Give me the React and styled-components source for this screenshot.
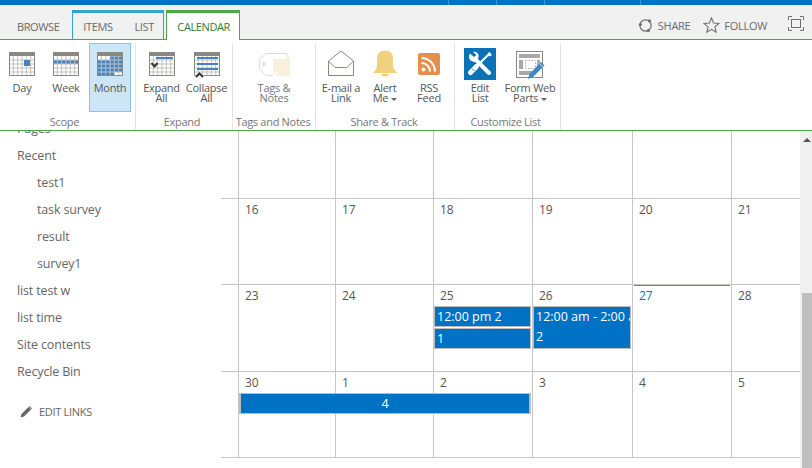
import React from 'react';
import styled, { createGlobalStyle } from 'styled-components';

const GlobalStyle = createGlobalStyle`
  html, body {
    margin: 0;
    height: 100%;
    overflow: hidden;
    background: #fff;
  }
  #root {
    height: 100%;
  }
`;

const Page = styled.div`
  display: flex;
  flex-direction: column;
  width: 812px;
  height: 468px;
  overflow: hidden;
  font-family: 'Open Sans', 'Noto Sans', sans-serif;
  color: #666;
`;

const TopBar = styled.div`
  display: flex;
  justify-content: flex-end;
  height: 5px;
  background: #0072c6;
`;
const SuiteCell = styled.div`
  width: ${({ w }) => w}px;
  box-sizing: border-box;
  border-left: 1px solid #3d90d2;
`;

const TabBar = styled.div`
  display: flex;
  align-items: flex-end;
  height: 35px;
  box-sizing: border-box;
  background: #f1f1f1;
  border-bottom: 1px solid #4ca64a;
  position: relative;
`;
const Tab = styled.div`
  font-size: 11px;
  line-height: 16px;
  letter-spacing: -0.4px;
  padding: 0 0 4px;
  margin-left: ${({ left }) => left}px;
  color: #6a6a6a;
`;
const ContextGroup = styled.div`
  display: flex;
  align-items: flex-end;
  box-sizing: border-box;
  width: 92px;
  height: 29px;
  margin-left: 13px;
  border: 1px solid #35a4cb;
  border-top-width: 3px;
  border-bottom: none;
`;
const ActiveTab = styled.div`
  box-sizing: border-box;
  width: 74px;
  height: 30px;
  margin: 0 0 -1px 2px;
  padding: 6px 0 0 10px;
  background: #fff;
  border: 1px solid #4ca64a;
  border-top-width: 3px;
  border-bottom: none;
  font-size: 11px;
  line-height: 16px;
  letter-spacing: -0.4px;
  color: #2f7d34;
`;
const TabActions = styled.div`
  display: flex;
  align-items: center;
  margin-left: auto;
  height: 100%;
  padding: 0 8px 0 0;
`;
const TabAction = styled.div`
  display: flex;
  align-items: center;
  gap: ${({ gap }) => gap}px;
  margin-right: ${({ right }) => right}px;
  font-size: 11px;
  letter-spacing: -0.3px;
  color: #6a6a6a;
  position: relative;
  top: 3px;
`;
const FocusButton = styled.div`
  display: flex;
  position: relative;
  top: 1px;
`;

const Ribbon = styled.div`
  display: flex;
  height: 91px;
  box-sizing: border-box;
  padding-top: 3px;
  background: #fff;
  border-bottom: 1px solid #4ca64a;
  flex-shrink: 0;
`;
const Group = styled.div`
  display: flex;
  flex-direction: column;
  justify-content: space-between;
  box-sizing: border-box;
  width: ${({ w }) => w}px;
  padding-left: ${({ pad }) => pad || 0}px;
  border-right: 1px solid #e4e4e4;
`;
const GroupButtons = styled.div`
  display: flex;
`;
const GroupLabel = styled.div`
  height: 16px;
  margin-left: ${({ pad }) => -(pad || 0)}px;
  padding-right: ${({ shift }) => shift || 0}px;
  font-size: 11px;
  line-height: 16px;
  text-align: center;
  letter-spacing: -0.3px;
  color: #777;
  white-space: nowrap;
`;
const RibbonButton = styled.div`
  display: flex;
  flex-direction: column;
  align-items: center;
  box-sizing: border-box;
  width: ${({ w }) => w || 44}px;
  height: 69px;
  padding-top: 5px;
  ${({ active }) =>
    active &&
    `
    margin: 0 1px;
    width: 42px;
    background: #cde6f7;
    border: 1px solid #92c0e0;
    padding-top: 4px;
  `}
`;
const ButtonText = styled.div`
  margin-top: 3px;
  font-size: 11px;
  line-height: 10px;
  letter-spacing: -0.25px;
  text-align: center;
  color: ${({ dim }) => (dim ? '#777' : '#555')};
  white-space: nowrap;
`;
const Caret = styled.span`
  display: inline-block;
  margin-left: 3px;
  vertical-align: 1px;
  border-left: 3px solid transparent;
  border-right: 3px solid transparent;
  border-top: 3px solid #666;
`;

const Main = styled.div`
  display: flex;
  flex: 1;
  min-height: 0;
  overflow: hidden;
`;
const Nav = styled.nav`
  width: 221px;
  flex-shrink: 0;
  margin-top: -16px;
`;
const NavItem = styled.div`
  height: 27px;
  line-height: 27px;
  padding-left: ${({ sub }) => (sub ? 37 : 17)}px;
  font-size: 12.5px;
  letter-spacing: -0.15px;
  color: #666;
`;
const EditLinks = styled.div`
  display: flex;
  align-items: center;
  gap: 7px;
  margin: 19px 0 0 20px;
  font-size: 11px;
  letter-spacing: -0.3px;
  color: #666;
`;

const Calendar = styled.div`
  width: 579px;
  flex-shrink: 0;
`;
const Week = styled.div`
  display: grid;
  grid-template-columns: 17px 97px 98px 99px 100px 99px 69px;
  grid-template-rows: 21px 22px 22px 1fr;
  box-sizing: border-box;
  height: ${({ h }) => h}px;
  border-top: ${({ open }) => (open ? 'none' : '1px solid #c6c6c6')};
  border-bottom: ${({ last }) => (last ? '1px solid #c6c6c6' : 'none')};
`;
const DayCell = styled.div`
  grid-row: 1 / -1;
  grid-column: ${({ col }) => col + 2};
  box-sizing: border-box;
  padding: 2px 0 0 6px;
  border-left: 1px solid #c6c6c6;
  font-size: 12px;
  line-height: 18px;
  color: ${({ today }) => (today ? '#0072c6' : '#555')};
`;
const TodayMark = styled.div`
  height: 1px;
  margin: -2px 1px 1px -5px;
  background: #3b8fd8;
`;
const EventBar = styled.div`
  grid-row: ${({ row }) => row} / span ${({ rows }) => rows || 1};
  grid-column: ${({ col }) => col + 2} / span ${({ span }) => span || 1};
  z-index: 1;
  box-sizing: border-box;
  margin: 0 1px 1px 1px;
  padding: 0 2px;
  overflow: hidden;
  white-space: nowrap;
  background: #0072c6;
  border: 1px solid #bdbdbd;
  border-width: ${({ wide }) => (wide ? '1px 2px' : '1px')};
  font-size: 12.5px;
  line-height: 20px;
  color: #fff;
  text-align: ${({ wide }) => (wide ? 'center' : 'left')};
`;

const Scrollbar = styled.div`
  flex: 1;
  display: flex;
  flex-direction: column;
  align-items: flex-end;
  background: #f0f0f0;
`;
const ScrollArrow = styled.div`
  align-self: center;
  margin: 7px 0 0 1px;
  border-left: 4px solid transparent;
  border-right: 4px solid transparent;
  border-top: none;
  border-bottom: 4px solid #555;
`;
const ScrollThumb = styled.div`
  width: 10px;
  margin-top: auto;
  height: 175px;
  background: #bfbfbf;
`;

/* ---- drawings ---- */

const cellW = 26 / 6;
const GRID = '#b4b4ad';
const HEAD = '#8a8880';
const BLUE = '#4a80bb';

const CalendarIcon = ({ cells = [], bars = [], barLeft = 6, children }) => (
  <svg width="32" height="32" viewBox="0 0 32 32">
    <rect x="3" y="4" width="26" height="24" fill="#fff" />
    {[1, 2, 3, 4, 5].map(i => (
      <line key={i} x1={3 + i * cellW} x2={3 + i * cellW} y1="8" y2="28" stroke={GRID} strokeWidth="0.8" />
    ))}
    {[1, 2, 3, 4].map(i => (
      <line key={i} x1="3" x2="29" y1={8 + i * 4} y2={8 + i * 4} stroke={GRID} strokeWidth="0.8" />
    ))}
    {cells.map(([c, r]) => (
      <rect
        key={`${c}-${r}`}
        x={3.4 + c * cellW}
        y={8.4 + r * 4}
        width={cellW - 0.8}
        height="3.2"
        fill={BLUE}
      />
    ))}
    {bars.map(y => (
      <rect key={y} x={barLeft} y={y} width={27 - barLeft} height="2" fill={BLUE} />
    ))}
    <rect x="3.5" y="4.5" width="25" height="23" fill="none" stroke={HEAD} />
    <rect x="3" y="4" width="26" height="4" fill={HEAD} />
    {children}
  </svg>
);

const monthCells = [];
for (let r = 0; r < 5; r++) {
  for (let c = 0; c < 6; c++) {
    if ((r === 0 && c >= 3) || r === 1 || r === 2 || r === 3 || (r === 4 && c < 4)) {
      monthCells.push([c, r]);
    }
  }
}

const TagIcon = () => (
  <svg width="32" height="32" viewBox="0 0 32 32">
    <path
      d="M1.5 12 L7.5 5.5 H28 Q30 5.5 30 8 V11 M15 27.5 H7.5 L1.5 21 V12"
      fill="#fff"
      stroke="#dedede"
      strokeWidth="1"
    />
    <circle cx="6" cy="16" r="1.5" fill="none" stroke="#d5d5d5" />
    <path d="M15 11 H32 V28 H20 L15 23 Z" fill="#f9f0dc" />
    <path d="M15 23 H20 V28 Z" fill="#fff" stroke="#eadfc6" strokeWidth="0.5" />
  </svg>
);

const MailIcon = () => (
  <svg width="32" height="32" viewBox="0 0 32 32">
    <path
      d="M3.5 13 L16 3 L28.5 13 V27.5 H3.5 Z"
      fill="#fff"
      stroke="#8a8880"
      strokeWidth="1"
    />
    <path d="M3.5 13 L10 19.5 H22 L28.5 13" fill="none" stroke="#8a8880" strokeWidth="1" />
  </svg>
);

const BellIcon = () => (
  <svg width="32" height="32" viewBox="0 0 32 32">
    <path
      d="M16 2.5 C21.5 2.5 24 6 24 11 V17 C24 21 26 23 28.5 25 H3.5 C6 23 8 21 8 17 V11 C8 6 10.5 2.5 16 2.5 Z"
      fill="#f1d07e"
    />
    <path d="M12 26 H20 C19.5 28 18 28.5 16 28.5 C14 28.5 12.5 28 12 26 Z" fill="#f1d07e" />
  </svg>
);

const RssIcon = () => (
  <svg width="32" height="32" viewBox="0 0 32 32">
    <rect x="5" y="5" width="22" height="22" rx="2" fill="#e68f4c" />
    <circle cx="10.5" cy="21.5" r="2" fill="#fff" />
    <path d="M8.5 15 A8.5 8.5 0 0 1 17 23.5" fill="none" stroke="#fff" strokeWidth="2" />
    <path d="M8.5 10 A13.5 13.5 0 0 1 22 23.5" fill="none" stroke="#fff" strokeWidth="2" />
  </svg>
);

const ToolsIcon = () => (
  <svg width="32" height="32" viewBox="0 0 32 32">
    <rect width="32" height="32" fill="#0b72b8" />
    <path d="M11 11 L25 25" stroke="#fff" strokeWidth="4" strokeLinecap="round" />
    <path
      d="M6 5.5 L10 9 L12.5 7 L9 4 C12 3.2 15 5.5 14.5 9 C14.3 10.5 13 12.5 11 13.5 C8 14.5 4.5 12 5 7.5 Z"
      fill="#fff"
    />
    <path d="M26 5 L14 17" stroke="#fff" strokeWidth="2.2" />
    <path d="M25 4 L28 7 L25.5 8.5 L23.5 6.5 Z" fill="#fff" />
    <path d="M12.5 18.5 L6.5 24.5" stroke="#fff" strokeWidth="5" strokeLinecap="round" />
    <path d="M8 20.5 L10.5 23" stroke="#0b72b8" strokeWidth="0.9" />
  </svg>
);

const WebPartIcon = () => (
  <svg width="32" height="32" viewBox="0 0 32 32">
    <rect x="2.5" y="3.5" width="26" height="26" fill="#fff" stroke="#8a8880" />
    <rect x="5" y="6" width="21" height="4" fill="#aaa9a9" />
    <rect x="5" y="12" width="4" height="9" fill="#aaa9a9" />
    <rect x="23" y="12" width="3" height="9" fill="#aaa9a9" />
    <rect x="5" y="23" width="15" height="4" fill="#aaa9a9" />
    <rect x="11.5" y="12.5" width="10" height="8" fill="none" stroke="#aaa9a9" strokeDasharray="1.5 1.5" />
    <path d="M14 31 L15.5 26 L27 14 L30.5 17.5 L19 29 Z" fill="#3f87c9" />
    <path d="M25.5 15.5 L29 19" stroke="#fff" strokeWidth="0.8" />
  </svg>
);

const ShareIcon = () => (
  <svg width="15" height="15" viewBox="0 0 15 15">
    <circle cx="7.5" cy="7.5" r="5.6" fill="none" stroke="#6f6f6f" strokeWidth="1.2" />
    <circle cx="2.3" cy="6.5" r="1.6" fill="#6f6f6f" />
    <circle cx="11.5" cy="2.8" r="1.6" fill="#6f6f6f" />
    <circle cx="10.3" cy="12.6" r="1.6" fill="#6f6f6f" />
  </svg>
);

const StarIcon = () => (
  <svg width="17" height="16" viewBox="0 0 17 16">
    <path
      d="M8.5 1 L10.6 6 L16 6.4 L11.9 9.9 L13.2 15.2 L8.5 12.4 L3.8 15.2 L5.1 9.9 L1 6.4 L6.4 6 Z"
      fill="none"
      stroke="#6f6f6f"
      strokeWidth="1.1"
    />
  </svg>
);

const FocusIcon = () => (
  <svg width="16" height="15" viewBox="0 0 16 15">
    <rect x="3.5" y="3.5" width="9" height="8" fill="none" stroke="#6f6f6f" />
    <path d="M0.5 4 V0.5 H4 M12 0.5 H15.5 V4 M15.5 11 V14.5 H12 M4 14.5 H0.5 V11" fill="none" stroke="#6f6f6f" />
  </svg>
);

const PencilIcon = () => (
  <svg width="12" height="12" viewBox="0 0 12 12">
    <path d="M0.5 11.5 L1.5 8 L8.5 1 L11 3.5 L4 10.5 Z" fill="#666" />
    <path d="M8.8 0.7 L9.6 0 L12 2.4 L11.3 3.2 Z" fill="#666" />
  </svg>
);

const navItems = [
  { label: 'Pages' },
  { label: 'Recent' },
  { label: 'test1', sub: true },
  { label: 'task survey', sub: true },
  { label: 'result', sub: true },
  { label: 'survey1', sub: true },
  { label: 'list test w' },
  { label: 'list time' },
  { label: 'Site contents' },
  { label: 'Recycle Bin' },
];

const weeks = [
  { h: 67, open: true, days: ['', '', '', '', '', ''] },
  { h: 86, days: ['16', '17', '18', '19', '20', '21'] },
  { h: 87, days: ['23', '24', '25', '26', '27', '28'], today: 4 },
  { h: 87, last: true, days: ['30', '1', '2', '3', '4', '5'] },
];

const App = () => (
  <Page>
    <GlobalStyle />
    <TopBar>
      <SuiteCell w={48} />
      <SuiteCell w={48} />
      <SuiteCell w={96} />
      <SuiteCell w={172} />
    </TopBar>

    <TabBar>
      <Tab left={17}>BROWSE</Tab>
      <ContextGroup>
        <Tab left={10}>ITEMS</Tab>
        <Tab left={22}>LIST</Tab>
      </ContextGroup>
      <ActiveTab>CALENDAR</ActiveTab>
      <TabActions>
        <TabAction gap={5} right={13}>
          <ShareIcon />
          SHARE
        </TabAction>
        <TabAction gap={4} right={21}>
          <StarIcon />
          FOLLOW
        </TabAction>
        <FocusButton>
          <FocusIcon />
        </FocusButton>
      </TabActions>
    </TabBar>

    <Ribbon>
      <Group w={136}>
        <GroupButtons>
          <RibbonButton>
            <CalendarIcon>
              <rect x="18" y="12" width="6" height="6" fill={BLUE} />
            </CalendarIcon>
            <ButtonText>Day</ButtonText>
          </RibbonButton>
          <RibbonButton>
            <CalendarIcon cells={[[0, 1], [1, 1], [2, 1], [3, 1], [4, 1], [5, 1]]} />
            <ButtonText>Week</ButtonText>
          </RibbonButton>
          <RibbonButton active>
            <CalendarIcon cells={monthCells} />
            <ButtonText>Month</ButtonText>
          </RibbonButton>
        </GroupButtons>
        <GroupLabel shift={6}>Scope</GroupLabel>
      </Group>

      <Group w={97} pad={3}>
        <GroupButtons>
          <RibbonButton w={45}>
            <CalendarIcon bars={[9]} barLeft={10}>
              <path d="M5.5 15 L8.5 18.5 L11.5 15" fill="none" stroke="#333" strokeWidth="2" />
            </CalendarIcon>
            <ButtonText>
              Expand
              <br />
              All
            </ButtonText>
          </RibbonButton>
          <RibbonButton w={45}>
            <CalendarIcon bars={[9, 15, 20]}>
              <path d="M4 29.5 H13 V28 L8.5 24 L4 28 Z" fill="#fff" />
              <path d="M5 29 L8.5 25.5 L12 29" fill="none" stroke="#333" strokeWidth="2" />
            </CalendarIcon>
            <ButtonText>
              Collapse
              <br />
              All
            </ButtonText>
          </RibbonButton>
        </GroupButtons>
        <GroupLabel pad={3} shift={4}>Expand</GroupLabel>
      </Group>

      <Group w={83}>
        <GroupButtons>
          <RibbonButton w={82}>
            <TagIcon />
            <ButtonText dim>
              Tags &amp;
              <br />
              Notes
            </ButtonText>
          </RibbonButton>
        </GroupButtons>
        <GroupLabel shift={2}>Tags and Notes</GroupLabel>
      </Group>

      <Group w={139} pad={3}>
        <GroupButtons>
          <RibbonButton>
            <MailIcon />
            <ButtonText>
              E-mail a
              <br />
              Link
            </ButtonText>
          </RibbonButton>
          <RibbonButton>
            <BellIcon />
            <ButtonText>
              Alert
              <br />
              Me
              <Caret />
            </ButtonText>
          </RibbonButton>
          <RibbonButton>
            <RssIcon />
            <ButtonText>
              RSS
              <br />
              Feed
            </ButtonText>
          </RibbonButton>
        </GroupButtons>
        <GroupLabel pad={3} shift={2}>Share &amp; Track</GroupLabel>
      </Group>

      <Group w={106} pad={2}>
        <GroupButtons>
          <RibbonButton w={46}>
            <ToolsIcon />
            <ButtonText>
              Edit
              <br />
              List
            </ButtonText>
          </RibbonButton>
          <RibbonButton w={54}>
            <WebPartIcon />
            <ButtonText>
              Form Web
              <br />
              Parts
              <Caret />
            </ButtonText>
          </RibbonButton>
        </GroupButtons>
        <GroupLabel pad={2} shift={4}>Customize List</GroupLabel>
      </Group>
    </Ribbon>

    <Main>
      <Nav>
        {navItems.map(item => (
          <NavItem key={item.label} sub={item.sub}>
            {item.label}
          </NavItem>
        ))}
        <EditLinks>
          <PencilIcon />
          EDIT LINKS
        </EditLinks>
      </Nav>

      <Calendar>
        {weeks.map((week, w) => (
          <Week key={w} h={week.h} open={week.open} last={week.last}>
            {week.days.map((day, i) => (
              <DayCell key={i} col={i} today={week.today === i}>
                {week.today === i && <TodayMark />}
                {day}
              </DayCell>
            ))}
            {w === 2 && (
              <>
                <EventBar col={2} row={2}>12:00 pm 2</EventBar>
                <EventBar col={2} row={3}>1</EventBar>
                <EventBar col={3} row={2} rows={2}>
                  12:00 am - 2:00 am
                  <br />
                  2
                </EventBar>
              </>
            )}
            {w === 3 && (
              <EventBar col={0} row={2} span={3} wide>
                4
              </EventBar>
            )}
          </Week>
        ))}
      </Calendar>

      <Scrollbar>
        <ScrollArrow />
        <ScrollThumb />
      </Scrollbar>
    </Main>
  </Page>
);

export default App;
